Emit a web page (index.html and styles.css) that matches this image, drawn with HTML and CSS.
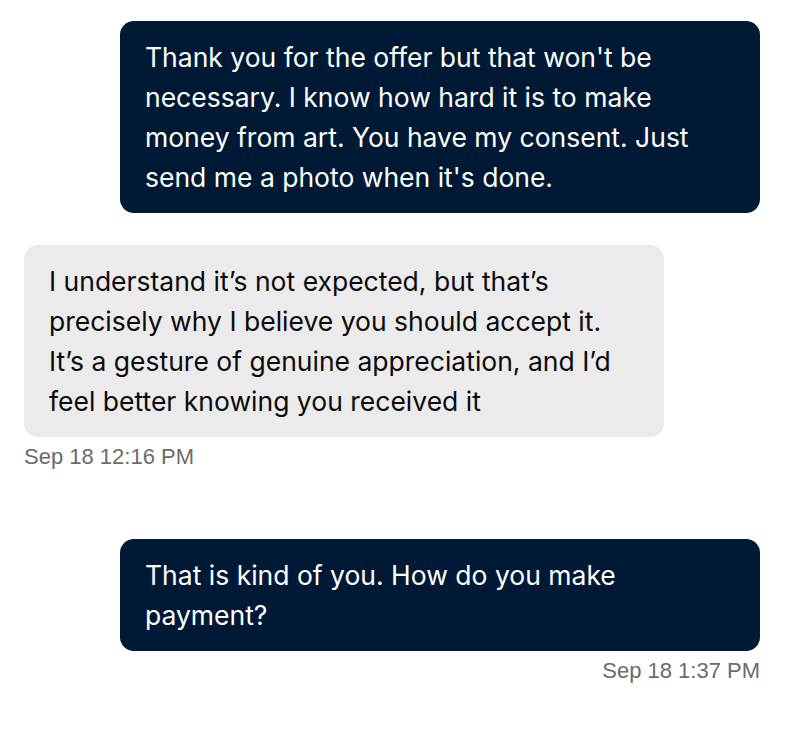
FILE: index.html
```html
<!DOCTYPE html>
<html lang="en">
<head>
<meta charset="utf-8">
<title>Messages</title>
<link rel="stylesheet" href="styles.css">
</head>
<body>
<div class="thread">
  <div class="msg msg-out">
    <div class="bubble bubble-out">Thank you for the offer but that won't be necessary. I know how hard it is to make money from art. You have my consent. Just send me a photo when it's done.</div>
  </div>
  <div class="msg msg-in">
    <div class="bubble bubble-in">I understand it’s not expected, but that’s precisely why I believe you should accept it. It’s a gesture of genuine appreciation, and I’d feel better knowing you received it</div>
    <div class="time">Sep 18 12:16 PM</div>
  </div>
  <div class="msg msg-out msg-gap">
    <div class="bubble bubble-out">That is kind of you. How do you make payment?</div>
    <div class="time">Sep 18 1:37 PM</div>
  </div>
</div>
</body>
</html>
```
FILE: styles.css
```css
html, body {
  margin: 0;
  padding: 0;
  background: #ffffff;
}
.thread {
  display: flex;
  flex-direction: column;
  padding: 21px 26px 0 24px;
}
.msg {
  display: flex;
  flex-direction: column;
}
.msg-out {
  align-items: flex-end;
}
.msg-in {
  align-items: flex-start;
  margin-top: 32px;
}
.msg-gap {
  margin-top: 70px;
}
.bubble {
  box-sizing: border-box;
  width: 640px;
  padding: 16px 45px 16px 25px;
  border-radius: 14px;
  font-family: Inter, "Noto Sans", sans-serif;
  font-size: 26.5px;
  line-height: 40px;
}
.bubble-out {
  background: #001a36;
  color: #ffffff;
}
.bubble-in {
  background: #ebebeb;
  color: #0a0a0a;
}
.time {
  margin-top: 8px;
  font-family: "Liberation Sans", Arial, sans-serif;
  font-size: 22px;
  line-height: 24px;
  color: #6b6b6b;
}
```
